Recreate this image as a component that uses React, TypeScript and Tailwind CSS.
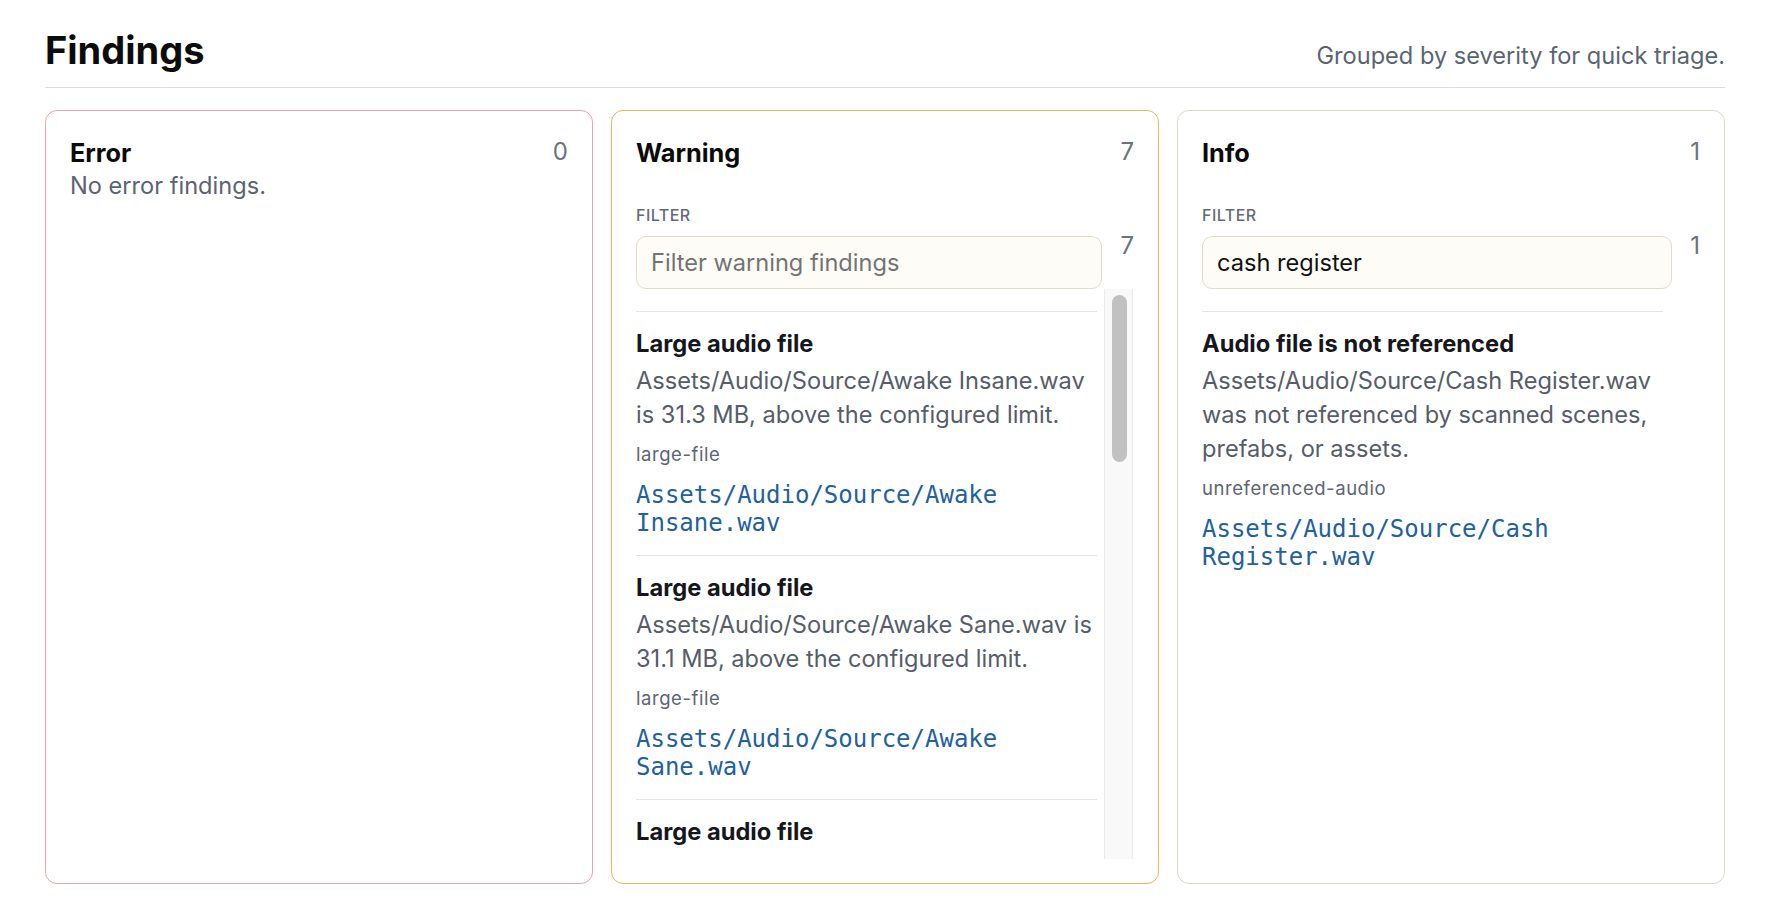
import React from "react";

type Finding = {
  title: string;
  message: string;
  rule: string;
  path: string;
};

const warningFindings: Finding[] = [
  {
    title: "Large audio file",
    message: "Assets/Audio/Source/Awake Insane.wav is 31.3 MB, above the configured limit.",
    rule: "large-file",
    path: "Assets/Audio/Source/Awake Insane.wav",
  },
  {
    title: "Large audio file",
    message: "Assets/Audio/Source/Awake Sane.wav is 31.1 MB, above the configured limit.",
    rule: "large-file",
    path: "Assets/Audio/Source/Awake Sane.wav",
  },
  {
    title: "Large audio file",
    message: "Assets/Audio/Source/Ambient Loop.wav is 24.8 MB, above the configured limit.",
    rule: "large-file",
    path: "Assets/Audio/Source/Ambient Loop.wav",
  },
];

const infoFindings: Finding[] = [
  {
    title: "Audio file is not referenced",
    message:
      "Assets/Audio/Source/Cash Register.wav was not referenced by scanned scenes, prefabs, or assets.",
    rule: "unreferenced-audio",
    path: "Assets/Audio/Source/Cash Register.wav",
  },
];

function FindingItem({ item }: { item: Finding }) {
  return (
    <li className="border-t border-[#e4e4e4] pt-[18px] pb-[18px]">
      <div className="text-[23.7px] leading-[28px] font-bold text-[#15171c]">{item.title}</div>
      <p className="mt-[6px] text-[23.6px] leading-[34px] text-[#565d69]">{item.message}</p>
      <div className="mt-[10px] text-[18.5px] leading-[24px] tracking-[0.03em] text-[#5d6470]">{item.rule}</div>
      <div className="mt-[15px] font-['DejaVu_Sans_Mono',monospace] text-[24px] leading-[28px] text-[#22609e]">
        {item.path}
      </div>
    </li>
  );
}

function CardHeader({ label, count }: { label: string; count: number }) {
  return (
    <div className="flex items-start justify-between">
      <h2 className="pt-[2px] text-[25.3px] leading-[32px] font-bold text-[#0b0b0c]">{label}</h2>
      <span className="text-[24px] leading-[34px] text-[#6b7280]">{count}</span>
    </div>
  );
}

function FilterRow({
  placeholder,
  value,
  count,
}: {
  placeholder: string;
  value?: string;
  count: number;
}) {
  return (
    <div className="mt-[34px] flex items-center gap-[18px]">
      <label className="flex min-w-0 flex-1 flex-col">
        <span className="text-[16px] leading-[24px] font-medium uppercase tracking-[0.03em] text-[#646b78]">
          Filter
        </span>
        <input
          readOnly
          value={value ?? ""}
          placeholder={placeholder}
          className="mt-[9px] h-[53px] w-full rounded-[10px] border border-[#e2ddcb] bg-[#fdfcf7] px-[14px] text-[23.6px] text-[#111214] placeholder:text-[#737373] outline-none"
        />
      </label>
      <span className="text-[24px] leading-[30px] text-[#6b7280]">{count}</span>
    </div>
  );
}

export default function App() {
  return (
    <div className="min-h-screen bg-white font-['Inter','Noto_Sans',sans-serif] text-[#111]">
      <div className="ml-[45px] w-[1680px]">
        <header className="flex items-baseline justify-between border-b border-[#dcdcdc] pt-[30px] pb-[16px]">
          <h1 className="text-[38px] leading-[40px] font-bold text-[#0c0c0d]">Findings</h1>
          <p className="text-[23.6px] leading-[30px] text-[#5c6370]">Grouped by severity for quick triage.</p>
        </header>

        <div className="mt-[22px] grid grid-cols-3 gap-[18px]">
          {/* Error column */}
          <section className="flex h-[774px] flex-col rounded-[12px] border border-[#eba3ad] p-[24px]">
            <CardHeader label="Error" count={0} />
            <p className="text-[23.6px] leading-[34px] text-[#5c6370]">No error findings.</p>
          </section>

          {/* Warning column */}
          <section className="flex h-[774px] flex-col rounded-[12px] border border-[#ebb460] p-[24px]">
            <CardHeader label="Warning" count={7} />
            <FilterRow placeholder="Filter warning findings" count={7} />
            <div className="flex min-h-0 flex-1 pr-[1px]">
              <ul className="min-w-0 flex-1 overflow-hidden pt-[22px] pr-[7px]">
                {warningFindings.map((f, i) => (
                  <FindingItem key={i} item={f} />
                ))}
              </ul>
              <div className="w-[29px] shrink-0 border-x border-[#ebebeb] bg-[#f9f9f9] pt-[6px] pl-[7px]">
                <div className="h-[167px] w-[15px] rounded-full bg-[#c1c1c1]" />
              </div>
            </div>
          </section>

          {/* Info column */}
          <section className="flex h-[774px] flex-col rounded-[12px] border border-[#dcd8c9] p-[24px]">
            <CardHeader label="Info" count={1} />
            <FilterRow placeholder="Filter info findings" value="cash register" count={1} />
            <div className="flex min-h-0 flex-1 pr-[1px]">
              <ul className="min-w-0 flex-1 overflow-hidden pt-[22px] pr-[7px]">
                {infoFindings.map((f, i) => (
                  <FindingItem key={i} item={f} />
                ))}
              </ul>
              <div className="w-[29px] shrink-0" />
            </div>
          </section>
        </div>
      </div>
    </div>
  );
}
